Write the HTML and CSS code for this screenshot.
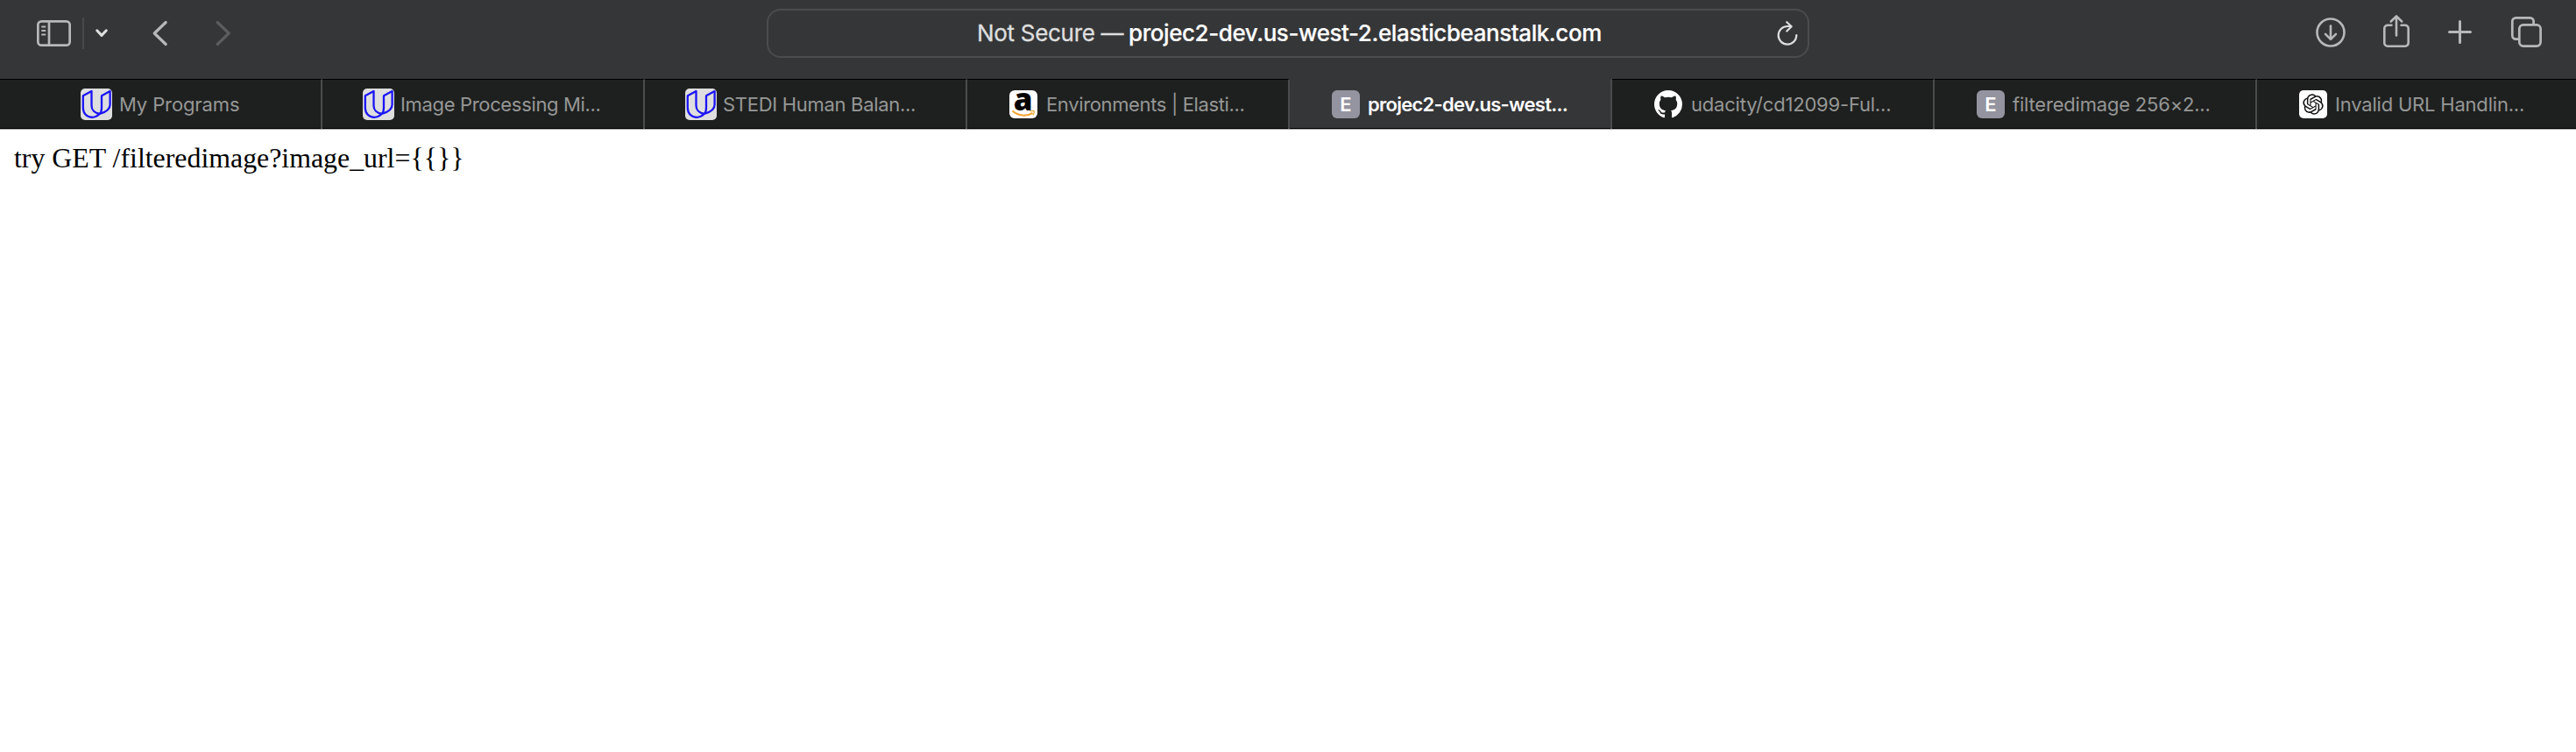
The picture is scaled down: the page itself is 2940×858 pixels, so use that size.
FILE: index.html
```html
<!DOCTYPE html>
<html lang="en">
<head>
<meta charset="utf-8">
<title>projec2-dev.us-west-2.elasticbeanstalk.com</title>
<link rel="stylesheet" href="styles.css">
</head>
<body>
<svg class="defs" width="0" height="0">
  <symbol id="udacity" viewBox="0 0 36 36">
    <rect width="36" height="36" rx="5" fill="#dededf"/>
    <path d="M2.800 8.300 12.500 3v16.500c0 5 3.500 8.600 9.300 9.300-2.500 2.600-5 4-8.500 4-6.300 0-10.500-4.600-10.500-10.800zM24 8.300 33.600 3v15.500c0 5.600-4 8.300-11.800 10.300C23.500 27.300 24 25 24 22z" fill="none" stroke="#1b14f5" stroke-width="2.300" stroke-linejoin="round"/>
  </symbol>
</svg>
<header class="toolbar">
  <div class="nav">
    <svg class="sidebar" width="39" height="30" viewBox="0 0 39 30" fill="none" stroke="#b7b8b9" stroke-width="2.700"><rect x="1.350" y="1.350" width="36.300" height="27.300" rx="4"/><path d="M14 1v28"/><path d="M6 7.500h3.500M6 12h3.500M6 16.500h3.500" stroke-width="1.800" stroke-linecap="round"/></svg>
    <span class="divider"></span>
    <svg class="menu" width="14" height="10" viewBox="0 0 14 10" fill="none" stroke="#dedfdf" stroke-width="3" stroke-linecap="round" stroke-linejoin="round"><path d="M1.700 1.800 7 7.400l5.300-5.600"/></svg>
    <svg class="back" width="18" height="30" viewBox="0 0 18 30" fill="none" stroke="#b7b8b9" stroke-width="3.200" stroke-linecap="round" stroke-linejoin="round"><path d="M15.200 2.500 2.200 15l13 12.500"/></svg>
    <svg class="forward" width="18" height="30" viewBox="0 0 18 30" fill="none" stroke="#5c5d5f" stroke-width="3.200" stroke-linecap="round" stroke-linejoin="round"><path d="M2.200 2.500l13 12.500-13 12.500"/></svg>
  </div>
  <div class="address">
    <span class="scheme">Not Secure —</span>
    <span class="host">projec2-dev.us-west-2.elasticbeanstalk.com</span>
    <svg class="reload" width="24" height="28" viewBox="0 0 24 28" fill="none" stroke="#dedfdf" stroke-width="2.200" stroke-linecap="round" stroke-linejoin="round"><path d="M22.300 16.200A10.300 10.300 0 1 1 12 6h4.600M11.300 1.200l5.300 5-5.300 5.300"/></svg>
  </div>
  <div class="actions">
    <svg width="34" height="34" viewBox="0 0 34 34" fill="none" stroke="#b7b8b9" stroke-width="2.600" stroke-linecap="round" stroke-linejoin="round"><circle cx="17" cy="17" r="15.500"/><path d="M17 9.500v15M11 18.800l6 6 6-6"/></svg>
    <svg class="share" width="30" height="37" viewBox="0 0 30 37" fill="none" stroke="#b7b8b9" stroke-width="2.600" stroke-linecap="round" stroke-linejoin="round"><path d="M9.500 11.800H5A3.700 3.700 0 0 0 1.300 15.500V32A3.700 3.700 0 0 0 5 35.700h20a3.700 3.700 0 0 0 3.700-3.700V15.500a3.700 3.700 0 0 0-3.700-3.700h-4.500M15 23.500V1.500M8.800 7.500 15 1.400l6.200 6.100"/></svg>
    <svg class="plus" width="27" height="27" viewBox="0 0 27 27" fill="none" stroke="#b7b8b9" stroke-width="3" stroke-linecap="round"><path d="M13.500 1.500v24M1.500 13.500h24"/></svg>
    <svg class="overview" width="35" height="35" viewBox="0 0 35 35" fill="none" stroke="#b7b8b9" stroke-width="2.700"><rect x="9.300" y="9.300" width="24.300" height="24.300" rx="4.500"/><path d="M9 25.600H5.300a4 4 0 0 1-4-4V5.300a4 4 0 0 1 4-4h16.300a4 4 0 0 1 4 4V9"/></svg>
  </div>
</header>
<nav class="tabs">
  <div class="tab first"><svg class="fav large"><use href="#udacity"/></svg><span class="label l1">My Programs</span></div>
  <div class="tab wide"><svg class="fav large"><use href="#udacity"/></svg><span class="label l2">Image Processing Mi...</span></div>
  <div class="tab wide"><svg class="fav large"><use href="#udacity"/></svg><span class="label l3">STEDI Human Balan...</span></div>
  <div class="tab"><svg class="fav" viewBox="0 0 32 32"><rect width="32" height="32" rx="6" fill="#fff"/><text class="amazon" x="15.700" y="22.600" text-anchor="middle">a</text><path d="M3.500 23.500c7 6.200 16.500 6.600 23 2.300" fill="none" stroke="#f5a32f" stroke-width="2"/><path d="M23.500 24c2-.8 4-.8 4.800-.2.300 1.300-.3 3.200-1.500 4.400" fill="none" stroke="#f5a32f" stroke-width="1.300"/></svg><span class="label l4">Environments | Elasti...</span></div>
  <div class="tab active"><span class="fav letter">E</span><span class="label l5">projec2-dev.us-west...</span></div>
  <div class="tab"><svg class="fav" viewBox="0 0 16 16"><path fill="#fff" d="M8 0C3.580 0 0 3.580 0 8c0 3.540 2.290 6.530 5.470 7.590.4.070.55-.17.55-.38 0-.19-.01-.82-.01-1.490-2.010.37-2.530-.49-2.690-.94-.09-.23-.48-.94-.82-1.130-.28-.15-.68-.52-.01-.53.63-.01 1.080.58 1.230.82.72 1.210 1.870.87 2.330.66.07-.52.28-.87.51-1.070-1.780-.2-3.640-.89-3.640-3.950 0-.87.31-1.590.82-2.150-.08-.2-.36-1.020.08-2.120 0 0 .67-.21 2.200.82.64-.18 1.320-.27 2-.27s1.360.09 2 .27c1.530-1.040 2.200-.82 2.200-.82.44 1.100.16 1.920.08 2.120.51.56.82 1.270.82 2.150 0 3.070-1.870 3.750-3.650 3.950.29.25.54.73.54 1.480 0 1.070-.01 1.930-.01 2.200 0 .21.15.46.55.38A8.010 8.010 0 0 0 16 8c0-4.420-3.580-8-8-8z"/></svg><span class="label l6">udacity/cd12099-Ful...</span></div>
  <div class="tab"><span class="fav letter">E</span><span class="label l7">filteredimage 256×2...</span></div>
  <div class="tab last"><svg class="fav" viewBox="0 0 32 32"><rect width="32" height="32" rx="5" fill="#fff"/><path transform="translate(4.300 4.300) scale(.975)" fill="#111" d="M22.2819 9.8211a5.9847 5.9847 0 0 0-.5157-4.9108 6.0462 6.0462 0 0 0-6.5098-2.9A6.0651 6.0651 0 0 0 4.9807 4.1818a5.9847 5.9847 0 0 0-3.9977 2.9 6.0462 6.0462 0 0 0 .7427 7.0966 5.98 5.98 0 0 0 .511 4.9107 6.051 6.051 0 0 0 6.5146 2.9001A5.9847 5.9847 0 0 0 13.2599 24a6.0557 6.0557 0 0 0 5.7718-4.2058 5.9894 5.9894 0 0 0 3.9977-2.9001 6.0557 6.0557 0 0 0-.7475-7.0729zm-9.022 12.6081a4.4755 4.4755 0 0 1-2.8764-1.0408l.1419-.0804 4.7783-2.7582a.7948.7948 0 0 0 .3927-.6813v-6.7369l2.02 1.1686a.071.071 0 0 1 .038.052v5.5826a4.504 4.504 0 0 1-4.4945 4.4944zm-9.6607-4.1254a4.4708 4.4708 0 0 1-.5346-3.0137l.142.0852 4.783 2.7582a.7712.7712 0 0 0 .7806 0l5.8428-3.3685v2.3324a.0804.0804 0 0 1-.0332.0615L9.74 19.9502a4.4992 4.4992 0 0 1-6.1408-1.6464zM2.3408 7.8956a4.485 4.485 0 0 1 2.3655-1.9728V11.6a.7664.7664 0 0 0 .3879.6765l5.8144 3.3543-2.0201 1.1685a.0757.0757 0 0 1-.071 0l-4.8303-2.7865A4.504 4.504 0 0 1 2.3408 7.872zm16.5963 3.8558L13.1038 8.364 15.1192 7.2a.0757.0757 0 0 1 .071 0l4.8303 2.7913a4.4944 4.4944 0 0 1-.6765 8.1042v-5.6772a.79.79 0 0 0-.407-.667zm2.0107-3.0231l-.142-.0852-4.7735-2.7818a.7759.7759 0 0 0-.7854 0L9.409 9.2297V6.8974a.0662.0662 0 0 1 .0284-.0615l4.8303-2.7866a4.4992 4.4992 0 0 1 6.6802 4.66zM8.3065 12.863l-2.02-1.1638a.0804.0804 0 0 1-.038-.0567V6.0742a4.4992 4.4992 0 0 1 7.3757-3.4537l-.142.0805L8.704 5.459a.7948.7948 0 0 0-.3927.6813zm1.0976-2.3654l2.602-1.4998 2.6069 1.4998v2.9994l-2.5974 1.4997-2.6067-1.4997Z"/></svg><span class="label l8">Invalid URL Handlin...</span></div>
</nav>
<main class="page">try GET /filteredimage?image_url={{}}</main>
</body>
</html>
```
FILE: styles.css
```css
* { box-sizing: border-box; }
body { margin: 0; min-height: 858px; background: #fff; font-family: Inter, "Liberation Sans", sans-serif; }
svg { display: block; flex: none; overflow: visible; }
.defs { position: absolute; }
.toolbar { height: 90px; background: #353638; display: grid; grid-template-columns: 875px 1190px 1fr; align-items: start; }
.nav { display: flex; align-items: center; height: 37px; margin-top: 19px; padding-left: 42px; }
.divider { width: 2px; height: 36px; margin-left: 13px; background: #48494b; }
.menu { margin-left: 13px; }
.back { margin-left: 51px; }
.forward { margin-left: 54px; }
.address { height: 56px; margin-top: 10px; border: 2px solid #4b4c4e; border-radius: 16px; display: flex; align-items: center; padding: 0 11px 0 238px; font-size: 26px; line-height: 52px; white-space: nowrap; }
.scheme { width: 173px; color: #dedfdf; letter-spacing: -0.3px; -webkit-text-stroke: 0.3px #dedfdf; }
.host { color: #fff; font-weight: 500; letter-spacing: -0.43px; -webkit-text-stroke: 0.2px #fff; }
.reload { margin: -1px 0 0 auto; }
.actions { display: flex; align-items: flex-start; padding: 20px 0 0 578px; }
.share { margin: -3px 0 0 43px; }
.plus { margin: 3px 0 0 44px; }
.overview { margin: -1px 0 0 45px; }
.tabs { height: 58px; display: grid; grid-template-columns: repeat(7, 368px) 1fr; border-bottom: 1px solid #aaa; }
.tab { display: flex; align-items: center; height: 57px; padding-left: 48px; background: #1e201f; color: #969796; border-top: 1px solid #000; border-right: 2px solid #4a4b4b; box-shadow: inset 0 -1px #000; font-size: 22px; line-height: 30px; white-space: nowrap; }
.first { padding-left: 92px; }
.wide { padding-left: 46px; }
.last { border-right: 0; }
.active { background: #353638; color: #fff; font-weight: 600; border-top-color: #353638; }
.fav { width: 32px; height: 32px; flex: none; }
.large { width: 36px; height: 36px; }
.letter { border-radius: 6px; background: #9494a0; color: #fff; font-size: 22px; font-weight: 600; line-height: 33px; text-align: center; }
.amazon { font: 800 35px "Open Sans", sans-serif; fill: #000; }
.label { margin-left: 9px; letter-spacing: -0.2px; }
.l1 { margin-left: 8px; letter-spacing: -0.12px; }
.l2 { margin-left: 7px; letter-spacing: -0.34px; }
.l3 { margin-left: 7px; letter-spacing: -0.3px; }
.l4 { margin-left: 10px; letter-spacing: -0.36px; }
.l5 { letter-spacing: -0.73px; }
.l6 { margin-left: 10px; }
.page { padding: 14px 16px; font: 31.85px/37px "Liberation Serif", serif; color: #000; }
```
